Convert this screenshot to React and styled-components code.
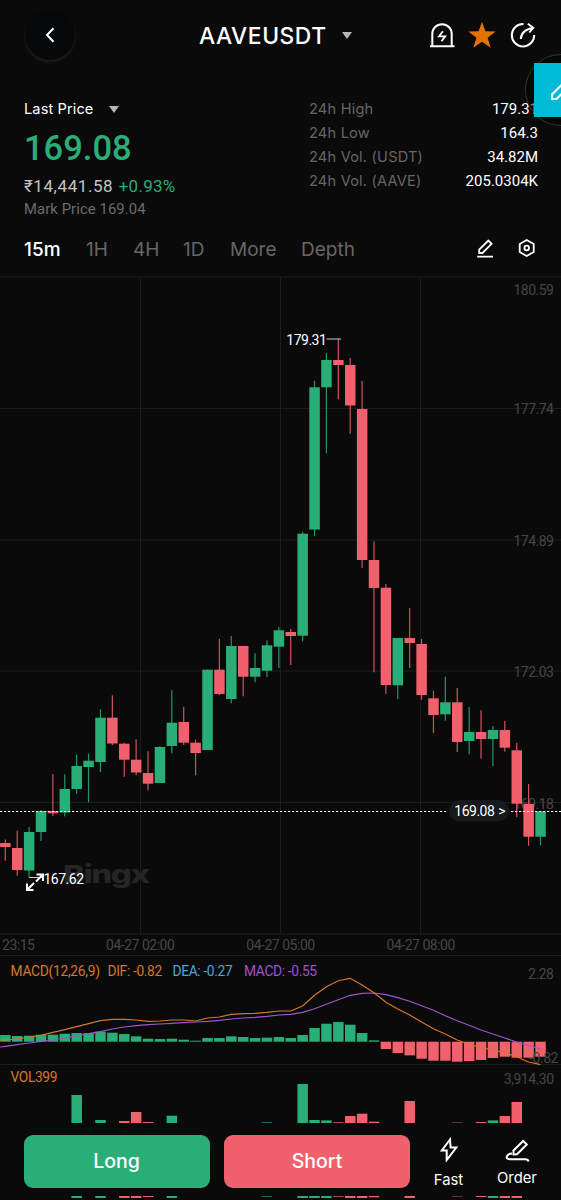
import React from "react";
import styled, { createGlobalStyle } from "styled-components";

const GREEN = "#2aae78";
const RED = "#f0616d";

const GlobalStyle = createGlobalStyle`
  * {
    box-sizing: border-box;
  }
  body {
    margin: 0;
    background: #0a0a0a;
    font-family: Inter, Roboto, sans-serif;
  }
`;

const Screen = styled.main`
  position: relative;
  width: 561px;
  height: 1200px;
  overflow: hidden;
  background: #0a0a0a;
  color: #fff;
`;

const Header = styled.header`
  display: flex;
  align-items: center;
  height: 70px;
  padding: 0 25px;
`;

const BackButton = styled.button`
  display: flex;
  align-items: center;
  justify-content: center;
  width: 50px;
  height: 50px;
  padding: 0;
  border: 0;
  border-radius: 50%;
  background: #07080a;
  box-shadow: 0 2px 3px 0 #1f2022;
`;

const Symbol = styled.h1`
  width: 129px;
  margin: 1px 0 0 124px;
  font-size: 22.8px;
  font-weight: 500;
  line-height: 30px;
  letter-spacing: 0.55px;
  white-space: nowrap;
`;

const Caret = styled.i`
  width: 0;
  height: 0;
  margin-left: ${(props) => props.$gap}px;
  border-left: 5.5px solid transparent;
  border-right: 5.5px solid transparent;
  border-top: 7.5px solid #b5b5b5;
`;

const HeaderIcons = styled.div`
  display: flex;
  align-items: center;
  gap: 13px;
  margin: 0 -1px 0 auto;
`;

const Ticker = styled.section`
  display: flex;
  justify-content: space-between;
  height: 154px;
  padding: 27px 23px 0 24px;
`;

const PriceSide = styled.div`
  display: flex;
  flex-direction: column;
`;

const PriceType = styled.div`
  display: flex;
  align-items: center;
  height: 24px;
  font-size: 14.6px;
  letter-spacing: 0.1px;
`;

const LastPrice = styled.div`
  height: 54px;
  font-family: Roboto, sans-serif;
  font-size: 34.5px;
  font-weight: 500;
  line-height: 54px;
  color: ${GREEN};
`;

const Fiat = styled.div`
  display: flex;
  gap: 5.5px;
  height: 23px;
  font-family: Roboto, sans-serif;
  font-size: 17px;
  line-height: 23px;
  letter-spacing: 0.57px;
  color: #c4c4c4;
`;

const Change = styled.span`
  color: ${GREEN};
  letter-spacing: 0.25px;
`;

const MarkPrice = styled.div`
  font-family: Roboto, sans-serif;
  font-size: 14.8px;
  line-height: 23px;
  letter-spacing: 0.1px;
  color: #6c6c6c;
`;

const Stats = styled.dl`
  display: flex;
  flex-direction: column;
  width: 229px;
  margin: 0;
`;

const StatRow = styled.div`
  display: flex;
  justify-content: space-between;
  height: 24px;
  line-height: 24px;
`;

const StatLabel = styled.dt`
  font-size: 14.6px;
  letter-spacing: 0.2px;
  color: #666;
`;

const StatValue = styled.dd`
  margin: 0;
  font-family: Roboto, sans-serif;
  font-size: 15px;
  line-height: 25px;
`;

const Intervals = styled.nav`
  display: flex;
  align-items: center;
  height: 50px;
  padding: 0 24px;
`;

const Interval = styled.span`
  width: ${(props) => props.$width}px;
  font-size: 19px;
  font-weight: ${(props) => (props.$active ? 500 : 400)};
  color: ${(props) => (props.$active ? "#fff" : "#666")};
  white-space: nowrap;
`;

const IntervalTools = styled.div`
  display: flex;
  gap: 22px;
  margin: -2px 0 0 auto;
`;

const Chart = styled.svg`
  display: block;
  font-family: Roboto, sans-serif;
`;

const ActionBar = styled.footer`
  display: flex;
  align-items: center;
  height: 72px;
  padding: 2px 23px 0 23.5px;
`;

const TradeButton = styled.button`
  flex: none;
  width: 186px;
  height: 53px;
  margin-right: 14.5px;
  border: 0;
  border-radius: 9px;
  background: ${(props) => (props.$side === "long" ? GREEN : RED)};
  color: #fff;
  font-family: Inter, sans-serif;
  font-size: 19.5px;
  font-weight: 500;
`;

const Shortcut = styled.div`
  display: flex;
  flex: none;
  flex-direction: column;
  align-items: center;
  gap: ${(props) => props.$gap}px;
  width: ${(props) => props.$width}px;
  margin-left: ${(props) => props.$offset}px;
  padding-top: 2px;
  font-size: 14.8px;
  line-height: 20px;
`;

const FloatingRing = styled.div`
  position: absolute;
  top: 54px;
  left: 525px;
  width: 72px;
  height: 72px;
  border: 1px solid #333;
  border-radius: 50%;
  background: rgba(0, 0, 0, 0.45);
`;

const FloatingEdit = styled.div`
  position: absolute;
  top: 63px;
  left: 534px;
  display: flex;
  align-items: center;
  width: 54px;
  height: 54px;
  padding-left: 16px;
  background: #00bbd6;
`;

const stats = [
  ["24h High", "179.31"],
  ["24h Low", "164.3"],
  ["24h Vol. (USDT)", "34.82M"],
  ["24h Vol. (AAVE)", "205.0304K"],
];

const intervals = [
  ["15m", 62],
  ["1H", 47],
  ["4H", 50],
  ["1D", 47],
  ["More", 71],
  ["Depth", 60],
];

// up, body top, body bottom, wick top, wick bottom
const candles = [
  [0, 843, 847, 839.5, 860.7],
  [0, 848, 870, 830.7, 875.7],
  [1, 832, 870.5, 827, 878],
  [1, 811, 832, 810, 841],
  [0, 811, 813.3, 774, 816],
  [1, 789, 812.5, 774.3, 816.3],
  [1, 766, 789, 754.7, 793.7],
  [1, 760.7, 767, 753.7, 802.3],
  [1, 717.7, 762, 709.3, 772],
  [0, 717.7, 743.5, 695.3, 745],
  [0, 743.7, 759.7, 742.7, 776.7],
  [0, 759.7, 772.5, 739.3, 775.3],
  [0, 773, 783.7, 751.3, 790.3],
  [1, 747, 783, 746, 783],
  [1, 722.7, 746, 690.3, 753.3],
  [0, 722, 742.7, 706.7, 745],
  [0, 742.7, 753, 739.7, 775.3],
  [1, 669.7, 750, 669.7, 750],
  [0, 669.7, 694, 639, 695],
  [1, 646, 699, 636, 703.3],
  [0, 646, 676.7, 646, 696.3],
  [1, 668, 676.7, 653.3, 682.3],
  [1, 645.3, 670.7, 640.3, 677],
  [1, 630.3, 646.7, 627, 668],
  [0, 632, 636, 629, 665],
  [1, 533.7, 635.7, 532, 641.3],
  [1, 387.3, 529.5, 380.7, 536],
  [1, 360, 387.3, 353, 453.3],
  [0, 360, 365, 339, 399.3],
  [0, 365, 405.5, 358, 433.7],
  [0, 409, 560, 381, 568],
  [0, 560, 588, 541.3, 672.3],
  [0, 587.7, 685, 584, 694],
  [1, 638, 685.3, 638, 699],
  [0, 638, 643, 608, 668],
  [0, 644, 695, 639, 699.7],
  [0, 698.3, 715, 690.7, 733],
  [1, 702.3, 714.3, 676.7, 720.7],
  [0, 702.3, 742, 688, 752],
  [1, 732, 741, 707, 754.3],
  [0, 732, 739, 710.3, 758.7],
  [1, 730, 739, 726, 766],
  [0, 730, 747.7, 721, 751.7],
  [0, 750.3, 803.7, 743, 817],
  [0, 804, 836.7, 784, 845.7],
  [1, 811.3, 836.7, 811.3, 845.3],
];

const histogram = [
  20, 17, 18, 21, 21, 24, 26, 26, 30, 27, 23, 16, 9, 8, 9, 6, 3, 11, 11, 16, 14,
  11, 12, 14, 11, 20, 41, 54, 59, 51, 26, 4, -22, -34, -41, -51, -57, -57, -60,
  -58, -55, -49, -45, -48, -48, -45,
];

const dif = [
  300, 297, 291, 286, 277, 269, 260, 251, 242, 238, 238, 240, 244, 243, 240,
  240, 243, 234, 231, 223, 221, 220, 217, 213, 213, 198, 166, 140, 122, 115,
  135, 158, 187, 207, 225, 246, 266, 282, 300, 313, 323, 330, 338, 350, 366,
  374,
];

const dea = [
  319, 314, 309, 304, 300, 294, 288, 281, 275, 267, 261, 257, 254, 252, 250,
  248, 246, 244, 241, 237, 234, 232, 229, 225, 223, 217, 206, 193, 179, 166,
  160, 159, 164, 173, 184, 197, 211, 227, 242, 256, 270, 282, 294, 306, 317,
  327,
];

// index, up, height
const volumes = [
  [6, 1, 28],
  [8, 1, 3],
  [10, 0, 2],
  [11, 0, 11],
  [12, 0, 1],
  [14, 1, 7.3],
  [22, 1, 0.6],
  [25, 1, 39],
  [26, 1, 3],
  [27, 1, 2.6],
  [28, 0, 0.7],
  [29, 0, 7],
  [30, 0, 9.3],
  [31, 0, 1.3],
  [34, 0, 22],
  [38, 0, 0.4],
  [40, 0, 1],
  [41, 1, 2.6],
  [42, 0, 7],
  [43, 0, 21],
];

const priceTicks = [
  ["180.59", 295, 277],
  ["177.74", 414, 408.5],
  ["174.89", 545.5, 540],
  ["172.03", 677, 671],
  ["169.18", 808.5, 802.5],
];

const x = (i) => 5.3 + 11.893 * i;
const barX = (i) => x(i) - 5.2;
const color = (up) => (up ? GREEN : RED);
const line = (values) =>
  values.map((v, i) => `${x(i).toFixed(1)},${(940 + v / 3).toFixed(1)}`).join(" ");

function PriceChart() {
  return (
    <Chart width="561" height="681" viewBox="0 274 561 681">
      <g stroke="#1d1d1d">
        {priceTicks.map(([label, , y]) => (
          <path key={label} d={`M0 ${y}H561`} />
        ))}
        <path d="M0 934H561M140.5 277V934M280.5 277V934M420.5 277V934" />
      </g>
      <text
        transform="translate(63 883) scale(1.32 1)"
        fontFamily="Inter, sans-serif"
        fontSize="25"
        fontWeight="800"
        fill="#252525"
        letterSpacing="-1.1"
      >
        Bingx
      </text>
      <g fontSize="14" fill="#464646" textAnchor="end" letterSpacing="-0.5">
        {priceTicks.map(([label, y]) => (
          <text key={label} x="553.5" y={y}>
            {label}
          </text>
        ))}
      </g>
      {candles.map(([up, top, bottom, high, low], i) => (
        <g key={i} fill={color(up)}>
          <rect x={x(i) - 0.6} y={high} width="1.2" height={low - high} opacity="0.85" />
          <rect x={barX(i)} y={top} width="10.5" height={bottom - top} />
        </g>
      ))}
      <path d="M0 811.5H447M511 811.5H561" stroke="#eee" strokeDasharray="2.3 1.7" />
      <rect x="449" y="800" width="60" height="21.5" rx="10.7" fill="#17191c" />
      <g fill="#fff" fontSize="14" letterSpacing="-0.5">
        <text x="454.3" y="816" wordSpacing="1" letterSpacing="-0.5">
          169.08 &gt;
        </text>
        <text x="286.3" y="344.7">
          179.31
        </text>
        <text x="43.5" y="883.5">
          167.62
        </text>
      </g>
      <path d="M326.5 339H341M29 877.5H43" stroke="#ccc" />
      <g fill="none" stroke="#fff" strokeWidth="2">
        <path d="M36.5 874.5H43V881M43 874.5L36 881.5" />
        <path d="M27 883.5V890H33.5M27 890L34 883" />
      </g>
      <g fontSize="14" fill="#464646" letterSpacing="-0.48">
        <text x="2" y="950">
          23:15
        </text>
        <text x="106" y="950">
          04-27 02:00
        </text>
        <text x="246.3" y="950">
          04-27 05:00
        </text>
        <text x="386.5" y="950">
          04-27 08:00
        </text>
      </g>
    </Chart>
  );
}

function MacdChart() {
  return (
    <Chart width="561" height="110" viewBox="0 955 561 110">
      <path d="M0 955.5H561M0 1064.5H561" stroke="#1d1d1d" />
      {histogram.map((v, i) => (
        <rect
          key={i}
          x={barX(i)}
          y={1041.7 + Math.min(-v / 3, 0)}
          width="10.5"
          height={Math.abs(v) / 3}
          fill={color(v > 0)}
        />
      ))}
      <g fontSize="13.8" letterSpacing="-0.35">
        <text x="10.5" y="976.3" fill="#d6762c" letterSpacing="-0.28">
          MACD(12,26,9)
        </text>
        <text x="107.5" y="976.3" fill="#d6762c">
          DIF: -0.82
        </text>
        <text x="172.5" y="976.3" fill="#4aa5d8">
          DEA: -0.27
        </text>
        <text x="244" y="976.3" fill="#9d54cf">
          MACD: -0.55
        </text>
      </g>
      <g fontSize="14" fill="#464646" textAnchor="end" letterSpacing="-0.45">
        <text x="553.5" y="978.5">
          2.28
        </text>
        <text x="558" y="1062.5">
          -0.82
        </text>
      </g>
      <g fill="none" strokeWidth="1.2">
        <polyline points={`0,1047 ${line(dea)}`} stroke="#9d54cf" />
        <polyline points={`0,1040 ${line(dif)}`} stroke="#d6762c" />
      </g>
    </Chart>
  );
}

function VolumeChart() {
  return (
    <Chart width="561" height="59" viewBox="0 1065 561 59">
      <text x="10.5" y="1082" fontSize="13.8" fill="#d6762c" letterSpacing="-0.4">
        VOL399
      </text>
      <text x="553.5" y="1084" fontSize="14" fill="#464646" textAnchor="end" letterSpacing="-0.5">
        3,914.30
      </text>
      {volumes.map(([i, up, h]) => (
        <rect key={i} x={barX(i)} y={1123 - h} width="10.5" height={h} fill={color(up)} />
      ))}
    </Chart>
  );
}

function App() {
  return (
    <>
      <GlobalStyle />
      <Screen>
        <Header>
          <BackButton aria-label="Back">
            <svg width="10" height="16" viewBox="0 0 10 16" fill="none" stroke="#fff" strokeWidth="2">
              <path d="M8.5 1.2L2 8L8.5 14.8" />
            </svg>
          </BackButton>
          <Symbol>AAVEUSDT</Symbol>
          <Caret $gap={14} />
          <HeaderIcons>
            <svg width="28" height="28" viewBox="0 0 28 28" fill="none" stroke="#fff" strokeWidth="2">
              <path d="M5.3 25V13C5.3 7.5 9.5 3.2 15 3.2S24.7 7.5 24.7 13V25M3 25.3H27.5" />
              <path d="M15.9 10.2L12 15.4H18.2L14.5 20.3" strokeWidth="1.8" />
            </svg>
            <svg width="28" height="28" viewBox="0 0 28 28" fill="#e37200">
              <path d="M14 0.8L17.4 10.2L27.7 10.5L19.6 16.7L22.7 26.7L14 20.8L5.3 26.7L8.4 16.7L0.3 10.5L10.6 10.2Z" />
            </svg>
            <svg width="28" height="28" viewBox="0 0 28 28" fill="none" stroke="#fff" strokeWidth="2">
              <path d="M14.5 3A11.2 11.2 0 1 0 25.2 14" />
              <path d="M11.8 18C12 12.5 16 8.3 24.3 6.8M18.8 2.8L24.3 6.8L20.3 11.5" strokeWidth="1.9" />
            </svg>
          </HeaderIcons>
        </Header>
        <Ticker>
          <PriceSide>
            <PriceType>
              Last Price
              <Caret $gap={16} />
            </PriceType>
            <LastPrice>169.08</LastPrice>
            <Fiat>
              ₹14,441.58 <Change>+0.93%</Change>
            </Fiat>
            <MarkPrice>Mark Price 169.04</MarkPrice>
          </PriceSide>
          <Stats>
            {stats.map(([label, value]) => (
              <StatRow key={label}>
                <StatLabel>{label}</StatLabel>
                <StatValue>{value}</StatValue>
              </StatRow>
            ))}
          </Stats>
        </Ticker>
        <Intervals>
          {intervals.map(([label, width], i) => (
            <Interval key={label} $width={width} $active={i === 0}>
              {label}
            </Interval>
          ))}
          <IntervalTools>
            <svg width="20" height="20" viewBox="0 0 20 20" fill="none" stroke="#fff" strokeWidth="1.8">
              <path d="M4.2 15V11.6L13.3 2.5L16.6 5.8L7.5 15ZM2.2 18.6H18" />
            </svg>
            <svg width="20" height="20" viewBox="0 0 20 20" fill="none" stroke="#fff" strokeWidth="1.8">
              <path d="M9.7 2L16.7 6V14L9.7 18L2.7 14V6Z" />
              <circle cx="9.7" cy="10" r="2.3" />
            </svg>
          </IntervalTools>
        </Intervals>
        <PriceChart />
        <MacdChart />
        <VolumeChart />
        <ActionBar>
          <TradeButton $side="long">Long</TradeButton>
          <TradeButton $side="short">Short</TradeButton>
          <Shortcut $width={34} $offset={7} $gap={8}>
            <svg width="24" height="28" viewBox="0 0 24 28" fill="none" stroke="#fff" strokeWidth="2">
              <path d="M13 5.5L4.8 16.5H9.7V26L19.3 13.5H13.6Z" />
            </svg>
            Fast
          </Shortcut>
          <Shortcut $width={42} $offset={30.5} $gap={5}>
            <svg width="26" height="26" viewBox="0 0 26 26" fill="none" stroke="#fff" strokeWidth="2">
              <path d="M9.5 17.5V13.5L19.2 4L22.8 7.5L13 17.3Z" />
              <path d="M8 16.5C2 17 1 22.2 5.5 22.2H21Q24.2 22.2 24.5 24.5" />
            </svg>
            Order
          </Shortcut>
        </ActionBar>
        <Chart width="561" height="4" viewBox="0 1196 561 4">
          {volumes.map(([i, up, h]) => (
            <rect key={i} x={barX(i)} y={1196} width="10.5" height={Math.min(h, 2)} fill={color(up)} />
          ))}
        </Chart>
        <FloatingRing />
        <FloatingEdit>
          <svg width="24" height="24" viewBox="0 0 24 24" fill="none" stroke="#fff" strokeWidth="2">
            <path d="M2 21V16.5L16 2.5L20.5 7L6.5 21Z" />
          </svg>
        </FloatingEdit>
      </Screen>
    </>
  );
}

export default App;
